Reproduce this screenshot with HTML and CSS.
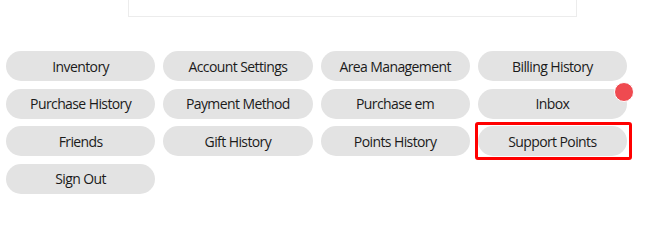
FILE: index.html
```html
<!DOCTYPE html>
<html>
<head>
<meta charset="utf-8">
<link rel="stylesheet" href="styles.css">
</head>
<body>
<div class="top-panel"></div>
<div class="menu">
  <button class="pill">Inventory</button>
  <button class="pill">Account Settings</button>
  <button class="pill">Area Management</button>
  <button class="pill">Billing History</button>
  <button class="pill">Purchase History</button>
  <button class="pill">Payment Method</button>
  <button class="pill">Purchase em</button>
  <button class="pill has-badge">Inbox<span class="badge"></span></button>
  <button class="pill">Friends</button>
  <button class="pill">Gift History</button>
  <button class="pill">Points History</button>
  <button class="pill highlighted">Support Points</button>
  <button class="pill">Sign Out</button>
</div>
</body>
</html>
```
FILE: styles.css
```css
html, body {
  margin: 0;
  padding: 0;
  background: #fff;
  font-family: "Open Sans", "Noto Sans", sans-serif;
}
.top-panel {
  margin-left: 128px;
  width: 447px;
  height: 16px;
  border: 1px solid #ececec;
  border-top: none;
  box-sizing: content-box;
}
.menu {
  margin: 34px 0 0 6px;
  width: 621px;
  display: grid;
  grid-template-columns: repeat(4, 1fr);
  column-gap: 8px;
  row-gap: 7.5px;
}
.pill {
  position: relative;
  height: 30px;
  border: none;
  border-radius: 15px;
  background: #e3e3e3;
  color: #1b1b1b;
  font-family: inherit;
  font-size: 14px;
  letter-spacing: -0.6px;
  padding: 0;
  margin: 0;
}
.badge {
  position: absolute;
  top: -7px;
  right: -7px;
  width: 18px;
  height: 18px;
  border-radius: 50%;
  background: #ef4a50;
  border: 1.5px solid #fff;
}
.highlighted::after {
  content: "";
  position: absolute;
  left: -3px;
  right: -5px;
  top: -4px;
  bottom: -4px;
  border: 3px solid #f00;
  border-radius: 3px;
}
```
